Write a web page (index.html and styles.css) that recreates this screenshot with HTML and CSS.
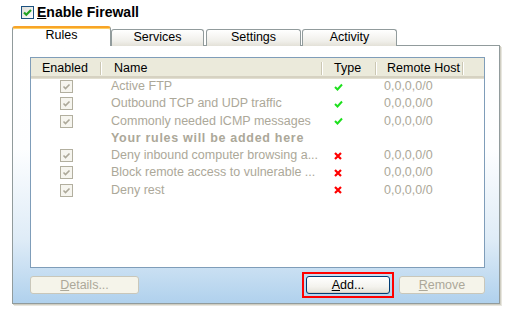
FILE: index.html
```html
<!DOCTYPE html>
<html>
<head>
<meta charset="utf-8">
<link rel="stylesheet" href="styles.css">
</head>
<body>
<div class="app">
  <div class="enable">
    <span class="cb-main"><svg width="11" height="11" viewBox="0 0 11 11"><path d="M2 5.5 L4.3 7.8 L9 3" fill="none" stroke="#21a121" stroke-width="2.2"/></svg></span>
    <span class="enable-label"><u>E</u>nable Firewall</span>
  </div>
  <div class="tabs">
    <div class="tab sel">Rules</div>
    <div class="tab t-services">Services</div>
    <div class="tab t-settings">Settings</div>
    <div class="tab t-activity">Activity</div>
  </div>
  <div class="panel">
    <div class="list">
      <div class="hdr">
        <div class="hc c1"><span>Enabled</span><i class="sep"></i></div>
        <div class="hc c2"><span>Name</span><i class="sep"></i></div>
        <div class="hc c3"><span>Type</span><i class="sep"></i></div>
        <div class="hc c4"><span>Remote Host</span><i class="sep"></i></div>
        <div class="hc c5"></div>
      </div>
      <div class="row">
        <div class="c1"><span class="cb"><svg width="11" height="11" viewBox="0 0 11 11"><path d="M2.5 5.5 L4.5 7.5 L8.5 3.5" fill="none" stroke="#aca899" stroke-width="1.6"/></svg></span></div>
        <div class="c2 nm">Active FTP</div>
        <div class="c3"><svg class="ok" width="9" height="8" viewBox="0 0 9 8"><path d="M1 4 L3.5 6.5 L8 1.5" fill="none" stroke="#1ee01e" stroke-width="2"/></svg></div>
        <div class="c4 rh">0,0,0,0/0</div>
      </div>
      <div class="row">
        <div class="c1"><span class="cb"><svg width="11" height="11" viewBox="0 0 11 11"><path d="M2.5 5.5 L4.5 7.5 L8.5 3.5" fill="none" stroke="#aca899" stroke-width="1.6"/></svg></span></div>
        <div class="c2 nm">Outbound TCP and UDP traffic</div>
        <div class="c3"><svg class="ok" width="9" height="8" viewBox="0 0 9 8"><path d="M1 4 L3.5 6.5 L8 1.5" fill="none" stroke="#1ee01e" stroke-width="2"/></svg></div>
        <div class="c4 rh">0,0,0,0/0</div>
      </div>
      <div class="row">
        <div class="c1"><span class="cb"><svg width="11" height="11" viewBox="0 0 11 11"><path d="M2.5 5.5 L4.5 7.5 L8.5 3.5" fill="none" stroke="#aca899" stroke-width="1.6"/></svg></span></div>
        <div class="c2 nm">Commonly needed ICMP messages</div>
        <div class="c3"><svg class="ok" width="9" height="8" viewBox="0 0 9 8"><path d="M1 4 L3.5 6.5 L8 1.5" fill="none" stroke="#1ee01e" stroke-width="2"/></svg></div>
        <div class="c4 rh">0,0,0,0/0</div>
      </div>
      <div class="row">
        <div class="c1"></div>
        <div class="c2 nm bold">Your rules will be added here</div>
        <div class="c3"></div>
        <div class="c4"></div>
      </div>
      <div class="row">
        <div class="c1"><span class="cb"><svg width="11" height="11" viewBox="0 0 11 11"><path d="M2.5 5.5 L4.5 7.5 L8.5 3.5" fill="none" stroke="#aca899" stroke-width="1.6"/></svg></span></div>
        <div class="c2 nm">Deny inbound computer browsing a...</div>
        <div class="c3"><svg class="no" width="8" height="8" viewBox="0 0 8 8"><path d="M1 1 L7 7 M7 1 L1 7" fill="none" stroke="#ff0000" stroke-width="2.2"/></svg></div>
        <div class="c4 rh">0,0,0,0/0</div>
      </div>
      <div class="row">
        <div class="c1"><span class="cb"><svg width="11" height="11" viewBox="0 0 11 11"><path d="M2.5 5.5 L4.5 7.5 L8.5 3.5" fill="none" stroke="#aca899" stroke-width="1.6"/></svg></span></div>
        <div class="c2 nm">Block remote access to vulnerable ...</div>
        <div class="c3"><svg class="no" width="8" height="8" viewBox="0 0 8 8"><path d="M1 1 L7 7 M7 1 L1 7" fill="none" stroke="#ff0000" stroke-width="2.2"/></svg></div>
        <div class="c4 rh">0,0,0,0/0</div>
      </div>
      <div class="row">
        <div class="c1"><span class="cb"><svg width="11" height="11" viewBox="0 0 11 11"><path d="M2.5 5.5 L4.5 7.5 L8.5 3.5" fill="none" stroke="#aca899" stroke-width="1.6"/></svg></span></div>
        <div class="c2 nm">Deny rest</div>
        <div class="c3"><svg class="no" width="8" height="8" viewBox="0 0 8 8"><path d="M1 1 L7 7 M7 1 L1 7" fill="none" stroke="#ff0000" stroke-width="2.2"/></svg></div>
        <div class="c4 rh">0,0,0,0/0</div>
      </div>
    </div>
    <div class="buttons">
      <div class="btn dis b-details"><u>D</u>etails...</div>
      <div class="spacer"></div>
      <div class="hl"><div class="btn b-add"><u>A</u>dd...</div></div>
      <div class="btn dis b-remove"><u>R</u>emove</div>
    </div>
  </div>
</div>
</body>
</html>
```
FILE: styles.css
```css
* { box-sizing: border-box; }
body {
  margin: 0;
  background: #fff;
  font-family: "Liberation Sans", Arial, sans-serif;
  font-size: 12px;
  color: #000;
}
.app {
  width: 514px;
  height: 317px;
  padding-top: 5px;
}
.enable {
  display: flex;
  align-items: center;
  height: 15px;
  padding-left: 21px;
}
.cb-main {
  width: 13px;
  height: 13px;
  border: 1px solid #1c5180;
  background: linear-gradient(135deg, #dcdcd7, #fff);
  display: flex;
  align-items: center;
  justify-content: center;
}
.enable-label {
  margin-left: 3px;
  font-weight: bold;
  font-size: 14px;
  line-height: 15px;
}
.tabs {
  display: flex;
  align-items: flex-end;
  margin-left: 12px;
  margin-top: 6px;
  height: 20px;
  margin-bottom: -1px;
}
.tab {
  height: 17px;
  border: 1px solid #919b9c;
  border-bottom: none;
  border-radius: 3px 3px 0 0;
  background: linear-gradient(#fff, #f0efea 70%, #e3e1d8);
  text-align: center;
  line-height: 14px;
  font-size: 12.5px;
}
.tab.sel {
  position: relative;
  z-index: 1;
  width: 99px;
  height: 20px;
  background: #fff;
  border-top: 2px solid #f8a428;
  box-shadow: inset 0 1px 0 #ffd062;
  line-height: 14px;
}
.t-services { width: 93px; }
.t-settings { width: 95px; margin-left: 2px; }
.t-activity { width: 95px; margin-left: 1px; }
.panel {
  margin-left: 12px;
  width: 488px;
  height: 259px;
  border: 1px solid #919b9c;
  box-shadow: 1px 1px 0 #d0cec2, 2px 2px 0 #e7e6df;
  background: linear-gradient(#fff 0%, #fdfeff 40%, #dfecf7 75%, #b0d1ed 100%);
  padding: 11px 14px 5px 17px;
}
.list {
  height: 211px;
  border: 1px solid #7f9db9;
  background: #fff;
}
.hdr {
  display: grid;
  grid-template-columns: 71px 221px 54px 87px 1fr;
  height: 20px;
  background: #ebeadb;
  border-bottom: 2px solid #d6d2c2;
  box-shadow: 0 1px 0 #e2dfd0;
}
.hc {
  display: flex;
  align-items: center;
  padding-top: 3px;
  line-height: 15px;
  font-size: 12.5px;
}
.hc.c1 { padding-left: 11px; }
.hc.c2 { padding-left: 12px; }
.hc.c3 { padding-left: 11px; }
.hc.c4 { padding-left: 10px; }
.sep {
  margin-left: auto;
  width: 2px;
  height: 13px;
  border-left: 1px solid #cbc7b3;
  border-right: 1px solid #fff;
}
.row {
  display: grid;
  grid-template-columns: 71px 221px 54px 87px 1fr;
  height: 17px;
  align-items: center;
  color: #aca899;
  font-size: 12.5px;
}
.row:nth-child(3), .row:nth-child(5), .row:nth-child(7) { height: 17.5px; }
.row > div {
  white-space: nowrap;
  overflow: hidden;
  height: 17px;
  line-height: 17px;
  display: flex;
  align-items: center;
}
.row .c1 { justify-content: center; }
.cb {
  width: 13px;
  height: 13px;
  border: 1px solid #b2af9f;
  background: #f6f5ef;
  display: flex;
  align-items: center;
  justify-content: center;
}
.nm { padding-left: 9px; }
.bold { font-weight: bold; letter-spacing: 0.7px; }
.row .c3 { padding-left: 11px; }
.rh { padding-left: 7px; }
.buttons {
  display: flex;
  align-items: center;
  margin-top: 4px;
  height: 26px;
}
.spacer { flex: 1; }
.btn {
  height: 18px;
  border-radius: 3px;
  text-align: center;
  line-height: 16px;
  font-size: 12.5px;
}
.btn.dis {
  border: 1px solid #c9c7ba;
  background: #f5f4ea;
  color: #aca899;
}
.b-details { width: 109px; }
.b-remove { width: 86px; margin-left: 5px; }
.hl {
  border: 2px solid #f00;
  padding: 2px;
  width: 92px;
  height: 26px;
}
.b-add {
  width: 84px;
  border: 1px solid #003c74;
  background: linear-gradient(#fff, #f4f3ee 60%, #e3e1d8);
  box-shadow: inset 0 -1px 0 #d6d0c5;
}
```
